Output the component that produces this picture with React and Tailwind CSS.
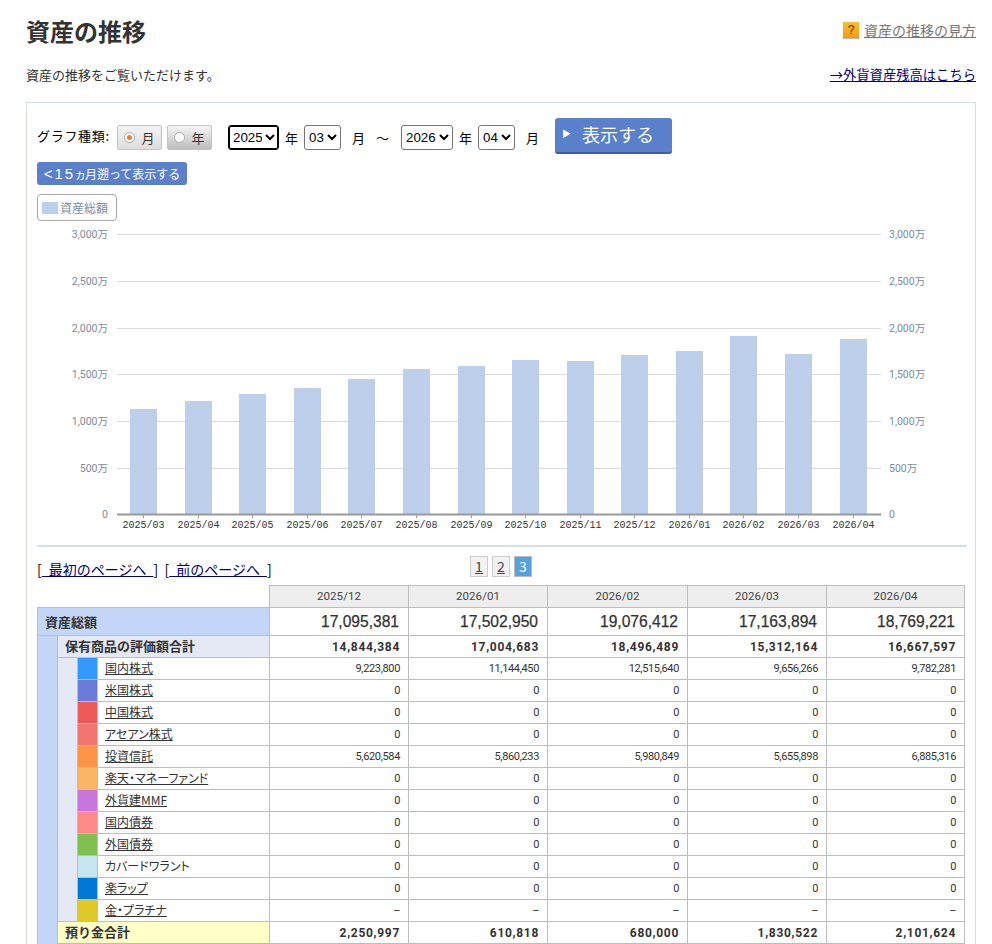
import React from "react";

const JP = "font-['Noto_Sans_CJK_JP','Liberation_Sans',sans-serif]";
const NUM = "font-['Roboto','Liberation_Sans',sans-serif]";

const barLefts = [130, 185, 239, 294, 348, 403, 458, 512, 567, 621, 676, 730, 785, 840];
const barTops = [409, 401, 394, 388, 379, 369, 366, 360, 361, 355, 351, 336, 354, 339];
const months = ["2025/03","2025/04","2025/05","2025/06","2025/07","2025/08","2025/09","2025/10","2025/11","2025/12","2026/01","2026/02","2026/03","2026/04"];
const grid = [[234,"3,000万"],[281,"2,500万"],[328,"2,000万"],[374,"1,500万"],[421,"1,000万"],[468,"500万"],[514,"0"]];

const rows = [
  ["#3399ff","国内株式",["9,223,800","11,144,450","12,515,640","9,656,266","9,782,281"],true],
  ["#6b7bd9","米国株式",["0","0","0","0","0"],true],
  ["#ee5a5a","中国株式",["0","0","0","0","0"],true],
  ["#f47570","アセアン株式",["0","0","0","0","0"],true],
  ["#ff9448","投資信託",["5,620,584","5,860,233","5,980,849","5,655,898","6,885,316"],true],
  ["#f8b664","楽天・マネーファンド",["0","0","0","0","0"],true],
  ["#c676dd","外貨建MMF",["0","0","0","0","0"],true],
  ["#ff8a8a","国内債券",["0","0","0","0","0"],true],
  ["#80c050","外国債券",["0","0","0","0","0"],true],
  ["#c8e6ef","カバードワラント",["0","0","0","0","0"],false],
  ["#0078d8","楽ラップ",["0","0","0","0","0"],true],
  ["#e0c828","金・プラチナ",["–","–","–","–","–"],true],
];

function Chart() {
  const H = 310, oy = 224, ox = 37;
  const axisFont = "'Roboto','Noto Sans CJK JP',sans-serif";
  return (
    <svg width="930" height={H} viewBox={`${ox} ${oy} 930 ${H}`} className="block">
      {grid.slice(0, 6).map(([y]) => (
        <line key={y} x1="117" x2="881" y1={y + 0.5} y2={y + 0.5} stroke="#d9dbde" strokeWidth="1" />
      ))}
      {barLefts.map((x, i) => (
        <rect key={x} x={x} y={barTops[i]} width="27" height={514 - barTops[i]} fill="#bdcfea" />
      ))}
      <line x1="117" x2="881" y1="514.5" y2="514.5" stroke="#999999" strokeWidth="2" />
      {barLefts.map((x, i) => (
        <g key={x}>
          <line x1={x + 13.5} x2={x + 13.5} y1="515" y2="518" stroke="#999999" strokeWidth="1" />
          <text x={x + 13.5} y="528" textAnchor="middle" fontFamily="'Liberation Mono',monospace" fontSize="10" fill="#333333">{months[i]}</text>
        </g>
      ))}
      {grid.map(([y, t]) => (
        <g key={t} fontSize="10.5" fill="#7a8ba0" fontFamily={axisFont}>
          <text x="108" y={y + 4} textAnchor="end">{t}</text>
          <text x="889" y={y + 4}>{t}</text>
        </g>
      ))}
    </svg>
  );
}

function Radio({ label, active }) {
  return (
    <div className={`flex h-[25px] w-[45px] items-center justify-center gap-[6px] rounded-[2px] border border-[#c4c4c4] text-[13px] text-[#333] ${active ? "bg-gradient-to-b from-[#f3f3f3] to-[#dedede]" : "bg-gradient-to-b from-[#f6f6f6] to-[#bdbdbd]"}`}>
      <span className="flex h-[11px] w-[11px] items-center justify-center rounded-full border border-[#a9a9a9] bg-white">
        {active && <span className="h-[5px] w-[5px] rounded-full bg-[#e8822a]" />}
      </span>
      {label}
    </div>
  );
}

function Sel({ value, w, focus }) {
  return (
    <select
      defaultValue={value}
      className={`h-[25px] ${w} rounded-[3px] bg-white font-['Liberation_Sans',sans-serif] text-[13.33px] text-black ${focus ? "border border-black shadow-[inset_0_0_0_1px_#000]" : "border border-[#767676]"}`}
    >
      <option>{value}</option>
    </select>
  );
}

const cellB = "border border-[#bdbdbd] p-0";
const boldNum = `${cellB} pr-[8px] text-right ${NUM} text-[12px] font-bold tracking-[0.7px] text-[#333]`;

export default function App() {
  return (
    <div className={`h-[944px] w-[992px] overflow-hidden bg-white pl-[26px] pr-[16px] text-[#333] ${JP}`}>
      <div className="flex h-[63px] items-start justify-between pt-[15px]">
        <h1 className="text-[24px] font-bold leading-[32px] text-[#333]">資産の推移</h1>
        <div className="mt-[4px] flex items-center gap-[5px]">
          <span className="flex h-[16px] w-[16px] items-center justify-center bg-gradient-to-b from-[#f8c030] to-[#f59a10] font-['Liberation_Sans',sans-serif] text-[12px] leading-none text-[#553300] shadow-[0_1px_1px_#bbb]">?</span>
          <a className="text-[14px] leading-[22px] text-[#777] underline">資産の推移の見方</a>
        </div>
      </div>
      <div className="flex h-[39px] items-start justify-between pt-[2px]">
        <p className="text-[13px] leading-[20px] text-[#333]">資産の推移をご覧いただけます。</p>
        <a className="text-[13.3px] leading-[20px] text-[#000080] underline">→外貨資産残高はこちら</a>
      </div>

      <div className="h-[900px] border border-[#d5dbe5] px-[10px] pt-[15px]">
        <div className="flex h-[36px] items-center text-[13px] text-black">
          <span className="mr-[7px] w-[73px] tracking-[0.7px]">グラフ種類:</span>
          <div className="mt-[3px] flex items-center gap-[5px]">
            <Radio label="月" active />
            <Radio label="年" />
          </div>
          <div className="ml-[16px] mt-[3px] flex items-center">
            <Sel value="2025" w="w-[51px]" focus />
            <span className="ml-[6px] w-[19px]">年</span>
            <Sel value="03" w="w-[37px]" />
            <span className="ml-[11px] w-[24px]">月</span>
            <span className="w-[25px]">～</span>
            <Sel value="2026" w="w-[52px]" />
            <span className="ml-[6px] w-[19px]">年</span>
            <Sel value="04" w="w-[37px]" />
            <span className="ml-[11px] w-[29px]">月</span>
          </div>
          <button className="flex h-[36px] w-[117px] items-center rounded-[3px] border-b-2 border-[#3d5f9e] bg-[#5b80cb] pb-[2px] pl-[7px] text-[18px] text-white">
            <span className="mr-[11px] w-[9px] text-[9px]">▶</span>表示する
          </button>
        </div>

        <button className="mt-[8px] block h-[23px] w-[150px] rounded-[3px] bg-[#5b80cb] text-[12px] leading-[23px] text-white">
          <span className="font-['Liberation_Sans',sans-serif] text-[15px] tracking-[2px]">&lt;15</span>
          <span className="[font-feature-settings:'palt']">ヵ</span>月遡って表示する
        </button>

        <div className="mt-[9px] flex h-[27px] w-[80px] items-center gap-[2px] rounded-[4px] border border-[#a9a9a9] pl-[4px] text-[12px] text-[#7a8ba0]">
          <span className="h-[12px] w-[16px] bg-[#bdcfea]" />
          資産総額
        </div>

        <div className="mt-[3px]">
          <Chart />
        </div>

        <div className="mt-[11px] h-[2px] w-[930px] bg-[#d5dfe7]" />

        <div className="mt-[9px] grid h-[29px] w-[928px] grid-cols-[1fr_auto_1fr] items-start">
          <div className="whitespace-pre text-[14px] leading-[26px] text-black">
            {"["}<a className="text-[#000080] underline">{"\u2002最初のページへ\u2002"}</a>{"]  ["}<a className="text-[#000080] underline">{"\u2002前のページへ\u2002"}</a>{"]"}
          </div>
          <div className="flex gap-[4px] text-[14px]">
            <span className="flex h-[21px] w-[18px] items-center justify-center border border-[#ccc] bg-[#f2f2f2] text-[#444] underline">1</span>
            <span className="flex h-[21px] w-[18px] items-center justify-center border border-[#ccc] bg-[#f2f2f2] text-[#444] underline">2</span>
            <span className="flex h-[21px] w-[18px] items-center justify-center border border-[#bbb] bg-[#55a0e0] text-white">3</span>
          </div>
          <div />
        </div>

        <table className="w-[927px] table-fixed border-collapse">
          <colgroup>
            <col className="w-[20px]" />
            <col className="w-[20px]" />
            <col className="w-[20px]" />
            <col className="w-[172px]" />
            <col className="w-[139px]" />
            <col className="w-[139px]" />
            <col className="w-[140px]" />
            <col className="w-[139px]" />
            <col className="w-[138px]" />
          </colgroup>
          <tbody>
            <tr className="h-[22px]">
              <td colSpan={4} className="p-0" />
              {["2025/12","2026/01","2026/02","2026/03","2026/04"].map((d) => (
                <td key={d} className={`${cellB} bg-[#eeeeee] text-center ${NUM} text-[11.5px] tracking-[0.1px] text-[#444]`}>{d}</td>
              ))}
            </tr>
            <tr className="h-[28px]">
              <td colSpan={4} className={`${cellB} bg-[#c3d6f7] pl-[7px] text-[13px] font-bold text-[#333]`}>資産総額</td>
              {["17,095,381","17,502,950","19,076,412","17,163,894","18,769,221"].map((n) => (
                <td key={n} className={`${cellB} pr-[9px] text-right font-['Liberation_Sans',sans-serif] text-[15.6px] leading-none text-[#333] [-webkit-text-stroke:0.25px_#333]`}>{n}</td>
              ))}
            </tr>
            <tr className="h-[22px]">
              <td rowSpan={15} className={`${cellB} bg-[#c3d6f7]`} />
              <td colSpan={3} className={`${cellB} bg-[#e4e9f5] pb-[1px] pl-[7px] text-[13px] font-bold leading-[20px] text-[#333]`}>保有商品の評価額合計</td>
              {["14,844,384","17,004,683","18,496,489","15,312,164","16,667,597"].map((n) => (
                <td key={n} className={boldNum}>{n}</td>
              ))}
            </tr>
            {rows.map(([color, label, vals, link], i) => (
              <tr key={label} className="h-[22px]">
                {i === 0 && <td rowSpan={12} className={`${cellB} bg-[#e4e9f5]`} />}
                <td className={cellB} style={{ backgroundColor: color }} />
                <td className={`${cellB} pb-[1px] pl-[7px] text-[12px] leading-[20px] text-[#333] [font-feature-settings:'palt'] ${link ? "underline" : ""}`}>{label}</td>
                {vals.map((v, j) => (
                  <td key={j} className={`${cellB} pr-[8px] pt-[1px] text-right ${NUM} text-[11px] leading-[20px] tracking-[-0.35px] text-[#333]`}>{v}</td>
                ))}
              </tr>
            ))}
            <tr className="h-[22px]">
              <td colSpan={3} className={`${cellB} bg-[#ffffc8] pb-[1px] pl-[7px] text-[13px] font-bold leading-[20px] text-[#333]`}>預り金合計</td>
              {["2,250,997","610,818","680,000","1,830,522","2,101,624"].map((n) => (
                <td key={n} className={boldNum}>{n}</td>
              ))}
            </tr>
            <tr className="h-[22px]">
              <td className={`${cellB} bg-[#ffffc8]`} />
              <td colSpan={2} className={cellB} />
              {[0, 1, 2, 3, 4].map((j) => (
                <td key={j} className={cellB} />
              ))}
            </tr>
          </tbody>
        </table>
      </div>
    </div>
  );
}
